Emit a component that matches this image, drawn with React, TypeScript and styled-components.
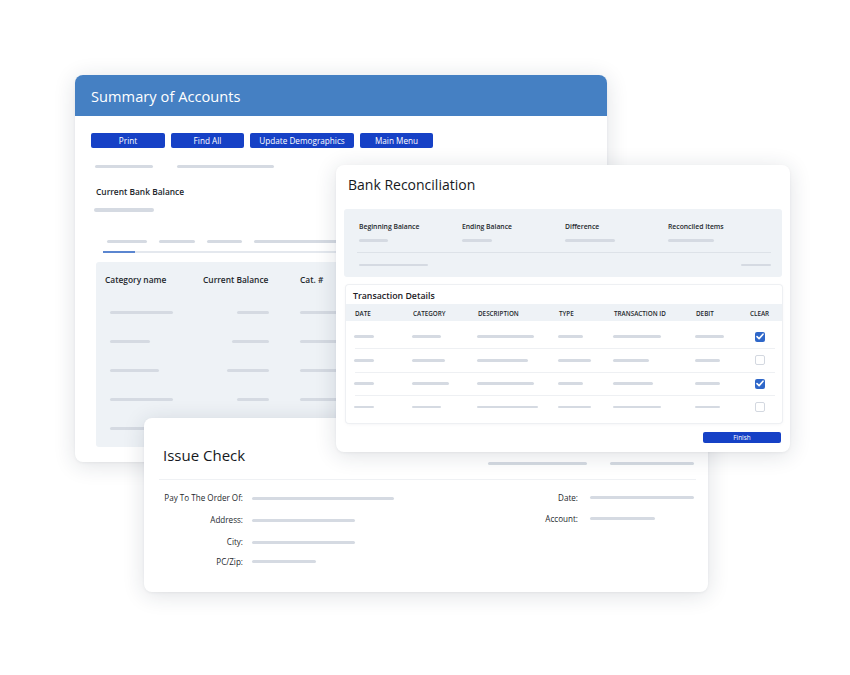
import styled, { createGlobalStyle } from "styled-components";

const GlobalStyle = createGlobalStyle`
	html, body {
		margin: 0;
		padding: 0;
		background: #ffffff;
	}
	body {
		font-family: "Open Sans", "Noto Sans", "Liberation Sans", sans-serif;
		color: #1d2126;
	}
`;

const Stage = styled.div`
	position: relative;
	width: 850px;
	height: 675px;
	overflow: hidden;
	background: #ffffff;
`;

const Window = styled.section<{ $x: number; $y: number; $w: number; $h: number; $z: number }>`
	position: absolute;
	left: ${ p => p.$x }px;
	top: ${ p => p.$y }px;
	width: ${ p => p.$w }px;
	height: ${ p => p.$h }px;
	z-index: ${ p => p.$z };
	background: #ffffff;
	border-radius: 8px;
	box-shadow: 0 3px 22px rgba(30, 40, 62, 0.14), 0 1px 3px rgba(30, 40, 62, 0.05);
	overflow: hidden;
	display: flex;
	flex-direction: column;
`;

const Bar = styled.span<{ $w: number; $h?: number }>`
	display: block;
	flex: none;
	width: ${ p => p.$w }px;
	height: ${ p => p.$h ?? 3 }px;
	border-radius: 3px;
	background: #d5dae2;
`;

/* ---------- Summary of Accounts ---------- */

const BlueHeader = styled.header`
	height: 41px;
	flex: none;
	display: flex;
	align-items: center;
	padding: 0 16px;
	background: #4580c3;
	color: #ffffff;
	font-size: 14.6px;
	letter-spacing: 0.05px;
`;

const SummaryBody = styled.div`
	display: flex;
	flex-direction: column;
	padding: 17px 0 0 16px;
`;

const ButtonRow = styled.div`
	display: flex;
	gap: 6px;
`;

const ActionButton = styled.button<{ $w: number }>`
	width: ${ p => p.$w }px;
	height: 15px;
	padding: 0;
	border: none;
	border-radius: 2px;
	background: #1641c6;
	color: #ffffff;
	font-family: inherit;
	font-size: 8.2px;
	line-height: 15px;
`;

const BarRow = styled.div<{ $gap: number; $indent: number; $top: number }>`
	display: flex;
	gap: ${ p => p.$gap }px;
	margin: ${ p => p.$top }px 0 0 ${ p => p.$indent }px;
`;

const FieldLabel = styled.div`
	margin: 18px 0 0 5px;
	font-size: 8.4px;
	line-height: 12px;
	font-weight: 600;
	color: #22262b;
`;

const TabTrack = styled.div`
	display: flex;
	margin: 8px 0 0 12px;
	height: 2px;
	background: #e4e8ee;
`;

const TabActive = styled.span`
	width: 32px;
	background: #5b86d0;
`;

const CategoryBox = styled.div`
	margin: 9px 0 0 5px;
	width: 500px;
	height: 185px;
	background: #eef2f6;
	border-radius: 3px;
	padding: 12px 0 0 9px;
	box-sizing: border-box;
`;

const CategoryGrid = styled.div<{ $top?: number }>`
	display: grid;
	grid-template-columns: 98px 97px 120px;
	grid-auto-rows: 29px;
	align-items: center;
	margin-top: ${ p => p.$top ?? 0 }px;
`;

const HeadGrid = styled(CategoryGrid)`
	grid-auto-rows: 12px;
`;

const ColHead = styled.div`
	font-size: 8.4px;
	line-height: 12px;
	font-weight: 600;
	color: #23272c;
	white-space: nowrap;
`;

const Cell = styled.div<{ $align?: "start" | "end"; $pad?: number }>`
	display: flex;
	justify-content: ${ p => p.$align === "end" ? "flex-end" : "flex-start" };
	padding: ${ p => p.$align === "end" ? `0 ${ p.$pad ?? 0 }px 0 0` : `0 0 0 ${ p.$pad ?? 0 }px` };
`;

/* ---------- Bank Reconciliation ---------- */

const WindowTitle = styled.h2<{ $size: number }>`
	margin: 0;
	font-weight: 500;
	font-size: ${ p => p.$size }px;
	line-height: 20px;
	color: #16191d;
`;

const BankHead = styled.div`
	padding: 10px 12px 0;
`;

const BalanceBox = styled.div`
	margin: 14px 8px 0;
	height: 68px;
	background: #eef2f6;
	border-radius: 3px;
	padding: 13px 11px 0 13px;
	box-sizing: border-box;
`;

const BalanceGrid = styled.div`
	display: grid;
	grid-template-columns: repeat(4, 103px);
	padding-left: 2px;
	row-gap: 7px;
`;

const SmallLabel = styled.div`
	font-size: 6.8px;
	line-height: 10px;
	font-weight: 600;
	color: #24282d;
	white-space: nowrap;
`;

const Divider = styled.div<{ $top?: number }>`
	height: 1px;
	margin-top: ${ p => p.$top ?? 0 }px;
	background: #dde2e8;
`;

const BalanceFoot = styled.div`
	display: flex;
	justify-content: space-between;
	align-items: center;
	padding: 0 0 0 2px;
	margin-top: 11px;
`;

const DetailsBox = styled.div`
	margin: 8px 8px 0 10px;
	height: 138px;
	background: #ffffff;
	border-radius: 3px;
	box-shadow: 0 0 0 1px #eef0f3, 0 1px 4px rgba(30, 40, 62, 0.06);
	display: flex;
	flex-direction: column;
`;

const DetailsTitle = styled.div`
	padding: 5px 7px 2px;
	font-size: 8.8px;
	line-height: 12px;
	font-weight: 600;
	color: #1d2025;
`;

const txColumns = "58px 65px 81px 55px 82px 54px 1fr";

const TxHeader = styled.div`
	display: grid;
	grid-template-columns: ${ txColumns };
	align-items: center;
	height: 17px;
	padding: 1px 7px 0 9px;
	box-sizing: border-box;
	background: #eef2f6;
	font-size: 6.3px;
	font-weight: 600;
	color: #24282d;
	text-transform: uppercase;
	white-space: nowrap;
`;

const TxBody = styled.div`
	margin: 4px 7px 0 9px;
`;

const TxRow = styled.div`
	display: grid;
	grid-template-columns: ${ txColumns };
	align-items: center;
	height: 23.3px;
	box-sizing: border-box;

	& + & {
		border-top: 1px solid #eef0f3;
	}
`;

const TxCell = styled.div`
	display: flex;
	align-items: center;
	margin-left: -1px;
`;

const CheckBox = styled.span<{ $checked: boolean }>`
	display: flex;
	align-items: center;
	justify-content: center;
	width: 10px;
	height: 10px;
	margin-left: 6px;
	box-sizing: border-box;
	border-radius: 2px;
	background: ${ p => p.$checked ? "#2f67c9" : "#ffffff" };
	border: ${ p => p.$checked ? "none" : "1.4px solid #d3d8e0" };
`;

const FinishRow = styled.div`
	display: flex;
	justify-content: flex-end;
	padding: 9px 9px 0 0;
`;

const FinishButton = styled(ActionButton)`
	height: 11px;
	font-size: 6.4px;
	line-height: 11px;
`;

/* ---------- Issue Check ---------- */

const CheckHead = styled.div`
	display: flex;
	align-items: flex-end;
	justify-content: space-between;
	padding: 27px 14px 0 19px;
`;

const HeadBars = styled.div`
	display: flex;
	gap: 23px;
`;

const CheckDivider = styled.div`
	height: 1px;
	margin: 14px 12px 0 15px;
	background: #eff1f4;
`;

const CheckForm = styled.div`
	display: flex;
	justify-content: space-between;
	padding: 7px 14px 0 19px;
`;

const FormGrid = styled.div<{ $label: number; $gap: number; $rows: string }>`
	display: grid;
	grid-template-columns: ${ p => p.$label }px auto;
	grid-template-rows: ${ p => p.$rows };
	column-gap: ${ p => p.$gap }px;
	align-items: center;
`;

const FormLabel = styled.div`
	text-align: right;
	font-size: 8.1px;
	line-height: 10px;
	font-weight: 500;
	color: #24282d;
	white-space: nowrap;
`;

const Check = () => (
	<svg width="8" height="7" viewBox="0 0 8 7">
		<path d="M1 3.6 L3.1 5.6 L7 1.2" fill="none" stroke="#ffffff" strokeWidth="1.6" strokeLinecap="round" strokeLinejoin="round" />
	</svg>
);

const categoryRows = [
	{ name: 63, balance: 32 },
	{ name: 40, balance: 37 },
	{ name: 49, balance: 42 },
	{ name: 63, balance: 32 },
	{ name: 63, balance: 32 }
];

const txRows = [
	{ bars: [ 20, 29, 57, 25, 48, 29 ], checked: true },
	{ bars: [ 20, 33, 51, 33, 36, 25 ], checked: false },
	{ bars: [ 20, 37, 57, 25, 40, 25 ], checked: true },
	{ bars: [ 20, 29, 61, 33, 48, 25 ], checked: false }
];

const txHeads = [ "Date", "Category", "Description", "Type", "Transaction ID", "Debit", "Clear" ];

const SummaryWindow = () => (
	<Window $x={ 75 } $y={ 75 } $w={ 532 } $h={ 387 } $z={ 1 }>
		<BlueHeader>Summary of Accounts</BlueHeader>
		<SummaryBody>
			<ButtonRow>
				<ActionButton $w={ 74 }>Print</ActionButton>
				<ActionButton $w={ 73 }>Find All</ActionButton>
				<ActionButton $w={ 104 }>Update Demographics</ActionButton>
				<ActionButton $w={ 73 }>Main Menu</ActionButton>
			</ButtonRow>
			<BarRow $gap={ 24 } $indent={ 4 } $top={ 17 }>
				<Bar $w={ 58 } />
				<Bar $w={ 97 } />
			</BarRow>
			<FieldLabel>Current Bank Balance</FieldLabel>
			<BarRow $gap={ 0 } $indent={ 3 } $top={ 10 }>
				<Bar $w={ 60 } $h={ 4 } />
			</BarRow>
			<BarRow $gap={ 12 } $indent={ 16 } $top={ 28 }>
				<Bar $w={ 40 } />
				<Bar $w={ 36 } />
				<Bar $w={ 35 } />
				<Bar $w={ 120 } />
			</BarRow>
			<TabTrack>
				<TabActive />
			</TabTrack>
			<CategoryBox>
				<HeadGrid>
					<ColHead>Category name</ColHead>
					<ColHead>Current Balance</ColHead>
					<ColHead>Cat. #</ColHead>
				</HeadGrid>
				<CategoryGrid $top={ 12 }>
					{ categoryRows.map((row, i) => [
						<Cell key={ `n${ i }` } $pad={ 5 }><Bar $w={ row.name } /></Cell>,
						<Cell key={ `b${ i }` } $align="end" $pad={ 31 }><Bar $w={ row.balance } /></Cell>,
						<Cell key={ `c${ i }` } $pad={ 0 }><Bar $w={ 40 } /></Cell>
					]) }
				</CategoryGrid>
			</CategoryBox>
		</SummaryBody>
	</Window>
);

const BankWindow = () => (
	<Window $x={ 336 } $y={ 165 } $w={ 454 } $h={ 287 } $z={ 3 }>
		<BankHead>
			<WindowTitle $size={ 14 }>Bank Reconciliation</WindowTitle>
		</BankHead>
		<BalanceBox>
			<BalanceGrid>
				<SmallLabel>Beginning Balance</SmallLabel>
				<SmallLabel>Ending Balance</SmallLabel>
				<SmallLabel>Difference</SmallLabel>
				<SmallLabel>Reconciled Items</SmallLabel>
				<Bar $w={ 29 } $h={ 2.5 } />
				<Bar $w={ 30 } $h={ 2.5 } />
				<Bar $w={ 50 } $h={ 2.5 } />
				<Bar $w={ 46 } $h={ 2.5 } />
			</BalanceGrid>
			<Divider $top={ 10 } />
			<BalanceFoot>
				<Bar $w={ 69 } $h={ 2.5 } />
				<Bar $w={ 30 } $h={ 2.5 } />
			</BalanceFoot>
		</BalanceBox>
		<DetailsBox>
			<DetailsTitle>Transaction Details</DetailsTitle>
			<TxHeader>
				{ txHeads.map(h => <span key={ h }>{ h }</span>) }
			</TxHeader>
			<TxBody>
				{ txRows.map((row, i) => (
					<TxRow key={ i }>
						{ row.bars.map((w, j) => (
							<TxCell key={ j }><Bar $w={ w } $h={ 2.5 } /></TxCell>
						)) }
						<TxCell>
							<CheckBox $checked={ row.checked }>{ row.checked && <Check /> }</CheckBox>
						</TxCell>
					</TxRow>
				)) }
			</TxBody>
		</DetailsBox>
		<FinishRow>
			<FinishButton $w={ 78 }>Finish</FinishButton>
		</FinishRow>
	</Window>
);

const CheckWindow = () => (
	<Window $x={ 144 } $y={ 418 } $w={ 564 } $h={ 174 } $z={ 2 }>
		<CheckHead>
			<WindowTitle $size={ 15 }>Issue Check</WindowTitle>
			<HeadBars>
				<Bar $w={ 99 } />
				<Bar $w={ 84 } />
			</HeadBars>
		</CheckHead>
		<CheckDivider />
		<CheckForm>
			<FormGrid $label={ 80 } $gap={ 9 } $rows="22px 22px 22px 17px">
				<FormLabel>Pay To The Order Of:</FormLabel>
				<Bar $w={ 142 } />
				<FormLabel>Address:</FormLabel>
				<Bar $w={ 103 } />
				<FormLabel>City:</FormLabel>
				<Bar $w={ 103 } />
				<FormLabel>PC/Zip:</FormLabel>
				<Bar $w={ 64 } />
			</FormGrid>
			<FormGrid $label={ 40 } $gap={ 12 } $rows="21px 21px">
				<FormLabel>Date:</FormLabel>
				<Bar $w={ 104 } />
				<FormLabel>Account:</FormLabel>
				<Bar $w={ 65 } />
			</FormGrid>
		</CheckForm>
	</Window>
);

export default function App() {
	return (
		<>
			<GlobalStyle />
			<Stage>
				<SummaryWindow />
				<BankWindow />
				<CheckWindow />
			</Stage>
		</>
	);
}
